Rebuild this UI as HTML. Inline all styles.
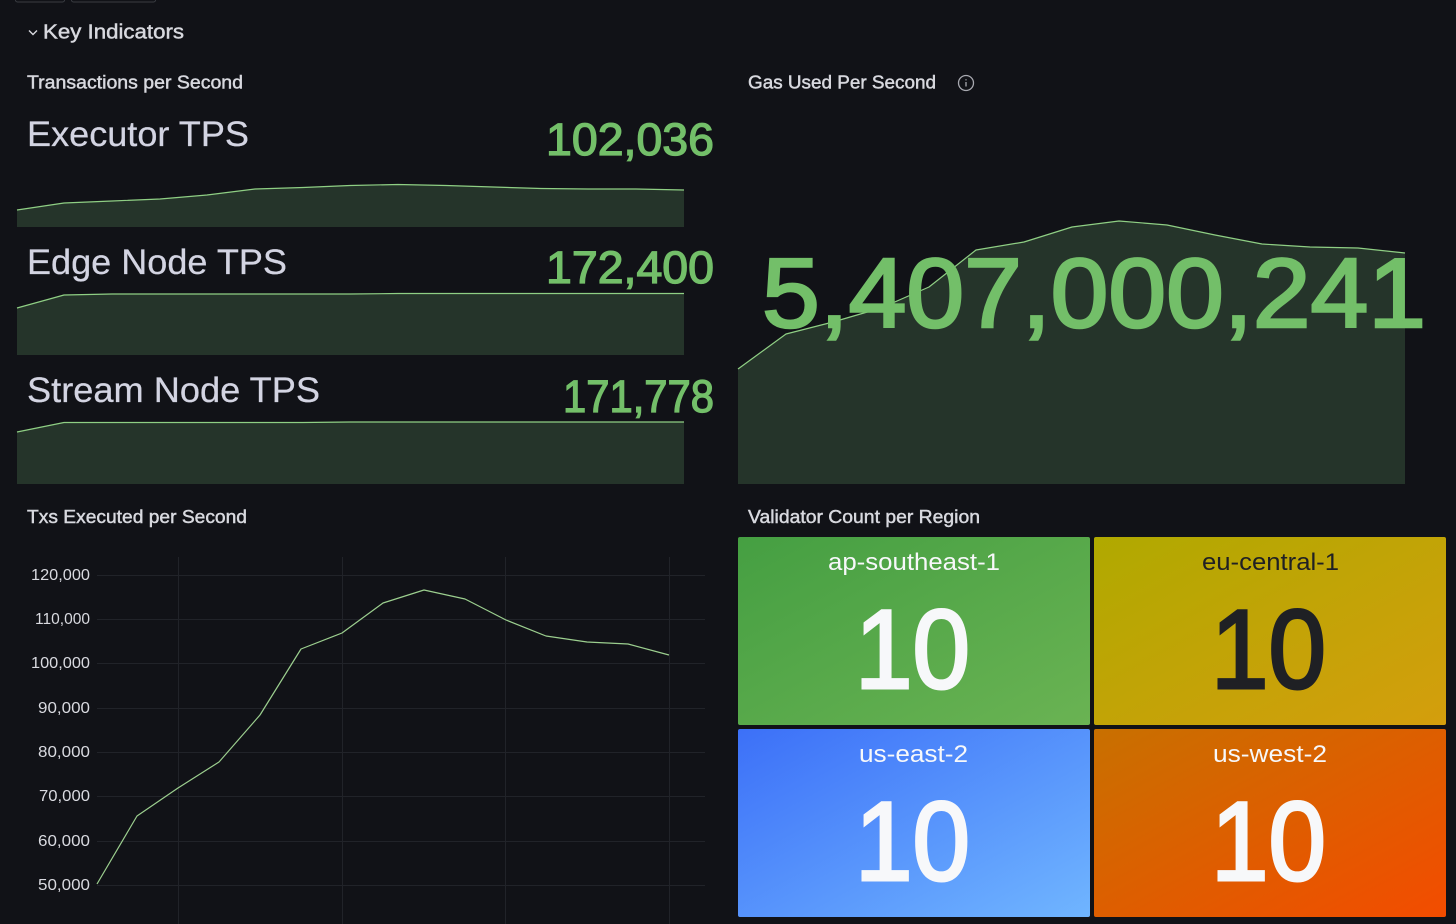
<!DOCTYPE html>
<html lang="en">
<head>
<meta charset="utf-8">
<title>Key Indicators</title>
<style>
html,body{margin:0;padding:0;background:#111217;width:1456px;height:924px;overflow:hidden}
svg{display:block;font-family:"Liberation Sans",sans-serif}
.t{fill:#d8d9df;font-size:18px;stroke:#d8d9df;stroke-width:.45}
.n{fill:#d3d4e2;font-size:35px;stroke:#d3d4e2;stroke-width:.25}
.v{fill:#73bf69;font-size:45px;stroke:#73bf69;stroke-width:1.3}
.a{fill:#25342a}
.l{fill:none;stroke:#8fcf84;stroke-width:1.2;stroke-linejoin:round}
.g{stroke:#212329;stroke-width:1}
.y{fill:#d9dae0;font-size:16px}
.r{font-size:24px;text-anchor:start}
.b{font-size:112px;stroke-width:3}
</style>
</head>
<body>
<svg width="1456" height="924" viewBox="0 0 1456 924" xmlns="http://www.w3.org/2000/svg">
<defs>
<linearGradient id="gr" x1="0" y1="0" x2="1" y2="1"><stop offset="0" stop-color="#459f42"/><stop offset="1" stop-color="#6ab353"/></linearGradient>
<linearGradient id="ye" x1="0" y1="0" x2="1" y2="1"><stop offset="0" stop-color="#b0a900"/><stop offset="1" stop-color="#d49e0d"/></linearGradient>
<linearGradient id="bl" x1="0" y1="0" x2="1" y2="1"><stop offset="0" stop-color="#3c70f8"/><stop offset="1" stop-color="#70b5ff"/></linearGradient>
<linearGradient id="or" x1="0" y1="0" x2="1" y2="1"><stop offset="0" stop-color="#c87000"/><stop offset="1" stop-color="#f34c00"/></linearGradient>
</defs>

<rect x="15.5" y="-8" width="49" height="10" rx="2" fill="none" stroke="#3a3c42"/>
<rect x="71.5" y="-8" width="84" height="10" rx="2" fill="none" stroke="#3a3c42"/>

<path d="M29 30.5l4 4 4-4" fill="none" stroke="#d8d9df" stroke-width="1.4"/>
<text x="43" y="38.5" font-size="20" fill="#d8d9df" stroke="#d8d9df" stroke-width=".45" textLength="141" lengthAdjust="spacingAndGlyphs">Key Indicators</text>

<text class="t" x="27" y="88.5" textLength="216" lengthAdjust="spacingAndGlyphs">Transactions per Second</text>
<text class="t" x="748" y="88.5" textLength="188" lengthAdjust="spacingAndGlyphs">Gas Used Per Second</text>
<circle cx="966" cy="83" r="7.5" fill="none" stroke="#a8a9b0" stroke-width="1.3"/>
<path d="M966 82v4.5M966 79.2v1.2" stroke="#a8a9b0" stroke-width="1.3" fill="none"/>

<path class="a" d="M17 210L64 203 112 201 160 199 207 195 255 189 303 187.5 350 185.5 398 184.5 446 185.5 493 187 541 188.5 588 189 636 189 684 190V227H17Z"/>
<path class="l" d="M17 210L64 203 112 201 160 199 207 195 255 189 303 187.5 350 185.5 398 184.5 446 185.5 493 187 541 188.5 588 189 636 189 684 190"/>
<text class="n" x="27" y="146" textLength="222" lengthAdjust="spacingAndGlyphs">Executor TPS</text>
<text class="v" x="546" y="155" textLength="168" lengthAdjust="spacingAndGlyphs">102,036</text>

<path class="a" d="M17 308L64 295 112 294 160 294 207 294 255 294 303 294 350 294 398 293.5 446 293.5 493 293.5 541 293.5 588 293.5 636 293.5 684 293.5V355H17Z"/>
<path class="l" d="M17 308L64 295 112 294 160 294 207 294 255 294 303 294 350 294 398 293.5 446 293.5 493 293.5 541 293.5 588 293.5 636 293.5 684 293.5"/>
<text class="n" x="27" y="274" textLength="260" lengthAdjust="spacingAndGlyphs">Edge Node TPS</text>
<text class="v" x="546" y="283" textLength="168" lengthAdjust="spacingAndGlyphs">172,400</text>

<path class="a" d="M17 432L64 422.5 112 422.5 160 422.5 207 422.5 255 422.5 303 422.5 350 422 398 422 446 422 493 422 541 422 588 422 636 422 684 422V484H17Z"/>
<path class="l" d="M17 432L64 422.5 112 422.5 160 422.5 207 422.5 255 422.5 303 422.5 350 422 398 422 446 422 493 422 541 422 588 422 636 422 684 422"/>
<text class="n" x="27" y="402" textLength="293" lengthAdjust="spacingAndGlyphs">Stream Node TPS</text>
<text class="v" x="563" y="412" textLength="151" lengthAdjust="spacingAndGlyphs">171,778</text>

<path class="a" d="M738 369L786 334 833 322 881 308 929 287 976 250 1024 242 1072 227 1119 221 1167 225 1215 235 1262 244 1310 247 1358 248 1405 253V484H738Z"/>
<path class="l" d="M738 369L786 334 833 322 881 308 929 287 976 250 1024 242 1072 227 1119 221 1167 225 1215 235 1262 244 1310 247 1358 248 1405 253"/>
<text x="762" y="327" font-size="98" fill="#73bf69" stroke="#73bf69" stroke-width="2.6" textLength="664" lengthAdjust="spacingAndGlyphs">5,407,000,241</text>

<text class="t" x="27" y="523" textLength="220" lengthAdjust="spacingAndGlyphs">Txs Executed per Second</text>
<text class="t" x="748" y="523" textLength="232" lengthAdjust="spacingAndGlyphs">Validator Count per Region</text>

<path class="g" d="M97 575.5H705M97 619.5H705M97 663.5H705M97 708.5H705M97 752.5H705M97 796.5H705M97 841.5H705M97 885.5H705M178.5 557V924M342.5 557V924M505.5 557V924M669.5 557V924"/>
<path class="l" style="stroke:#9ccf8f" d="M97 884L137 816 178 788 219 762 260 715 301 649 342 633 383 603 424 590 465 599 506 620 546 636 587 642 628 644 669 655"/>
<text class="y" x="31" y="580" textLength="59" lengthAdjust="spacingAndGlyphs">120,000</text>
<text class="y" x="35" y="624" textLength="55" lengthAdjust="spacingAndGlyphs">110,000</text>
<text class="y" x="31" y="668" textLength="59" lengthAdjust="spacingAndGlyphs">100,000</text>
<text class="y" x="38" y="713" textLength="52" lengthAdjust="spacingAndGlyphs">90,000</text>
<text class="y" x="38" y="757" textLength="52" lengthAdjust="spacingAndGlyphs">80,000</text>
<text class="y" x="39" y="801" textLength="51" lengthAdjust="spacingAndGlyphs">70,000</text>
<text class="y" x="38" y="846" textLength="52" lengthAdjust="spacingAndGlyphs">60,000</text>
<text class="y" x="38" y="890" textLength="52" lengthAdjust="spacingAndGlyphs">50,000</text>

<rect x="738" y="537" width="352" height="188" rx="2" fill="url(#gr)"/>
<rect x="1094" y="537" width="352" height="188" rx="2" fill="url(#ye)"/>
<rect x="738" y="729" width="352" height="188" rx="2" fill="url(#bl)"/>
<rect x="1094" y="729" width="352" height="188" rx="2" fill="url(#or)"/>

<g fill="#f7f8fa" stroke="#f7f8fa">
<text class="r" stroke="none" x="828" y="570" textLength="172" lengthAdjust="spacingAndGlyphs">ap-southeast-1</text>
<text class="b" x="855" y="688" textLength="115" lengthAdjust="spacingAndGlyphs">10</text>
<text class="r" stroke="none" x="859" y="762" textLength="109" lengthAdjust="spacingAndGlyphs">us-east-2</text>
<text class="b" x="855" y="880" textLength="115" lengthAdjust="spacingAndGlyphs">10</text>
<text class="r" stroke="none" x="1213" y="762" textLength="114" lengthAdjust="spacingAndGlyphs">us-west-2</text>
<text class="b" x="1211" y="880" textLength="115" lengthAdjust="spacingAndGlyphs">10</text>
</g>
<g fill="#1f2024" stroke="#1f2024">
<text class="r" stroke="none" x="1202" y="570" textLength="137" lengthAdjust="spacingAndGlyphs">eu-central-1</text>
<text class="b" x="1211" y="688" textLength="115" lengthAdjust="spacingAndGlyphs">10</text>
</g>
</svg>
</body>
</html>
